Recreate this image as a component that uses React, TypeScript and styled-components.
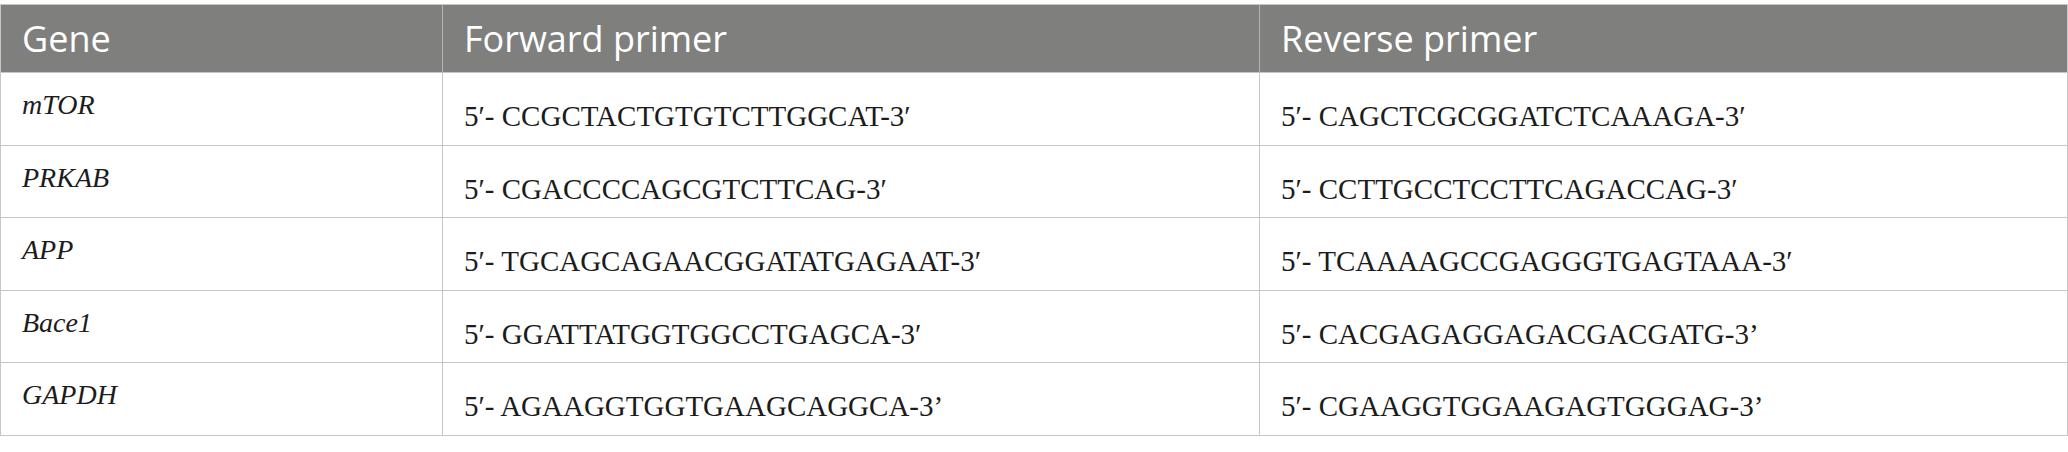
import styled, { createGlobalStyle } from "styled-components";

type Primer = {
  gene: string;
  forward: string;
  reverse: string;
};

const primers: Primer[] = [
  {
    gene: "mTOR",
    forward: "5′- CCGCTACTGTGTCTTGGCAT-3′",
    reverse: "5′- CAGCTCGCGGATCTCAAAGA-3′",
  },
  {
    gene: "PRKAB",
    forward: "5′- CGACCCCAGCGTCTTCAG-3′",
    reverse: "5′- CCTTGCCTCCTTCAGACCAG-3′",
  },
  {
    gene: "APP",
    forward: "5′- TGCAGCAGAACGGATATGAGAAT-3′",
    reverse: "5′- TCAAAAGCCGAGGGTGAGTAAA-3′",
  },
  {
    gene: "Bace1",
    forward: "5′- GGATTATGGTGGCCTGAGCA-3′",
    reverse: "5′- CACGAGAGGAGACGACGATG-3’",
  },
  {
    gene: "GAPDH",
    forward: "5′- AGAAGGTGGTGAAGCAGGCA-3’",
    reverse: "5′- CGAAGGTGGAAGAGTGGGAG-3’",
  },
];

const headers = ["Gene", "Forward primer", "Reverse primer"];

export default function App() {
  return (
    <>
      <GlobalStyle />
      <Table>
        {headers.map((h, i) => (
          <HeaderCell key={h} $first={i === 0}>
            {h}
          </HeaderCell>
        ))}
        {primers.map((p) => (
          <Row key={p.gene}>
            <Cell $first>
              <GeneName>{p.gene}</GeneName>
            </Cell>
            <Cell>
              <Sequence>{p.forward}</Sequence>
            </Cell>
            <Cell>
              <Sequence>{p.reverse}</Sequence>
            </Cell>
          </Row>
        ))}
      </Table>
    </>
  );
}

const GlobalStyle = createGlobalStyle`
  html, body {
    margin: 0;
    padding: 0;
    background: #ffffff;
  }
  body {
    font-family: "Liberation Serif", serif;
  }
`;

const Table = styled.div`
  display: grid;
  grid-template-columns: 441px 817px 808px;
  grid-template-rows: 68px repeat(5, 72.6px);
  margin-top: 4px;
  border: 1px solid #c6c6c6;
  border-bottom: none;
  width: 2068px;
  box-sizing: border-box;
`;

const Row = styled.div`
  display: contents;
`;

const HeaderCell = styled.div<{ $first?: boolean }>`
  box-sizing: border-box;
  display: flex;
  align-items: center;
  padding: 1px 0 0 21px;
  background: #7f807e;
  color: #ffffff;
  font-family: "Open Sans", sans-serif;
  font-size: 36px;
  line-height: 44px;
  border-bottom: 1px solid #c6c6c6;
  border-left: ${({ $first }) => ($first ? "none" : "1px solid #b4b4b4")};
`;

const Cell = styled.div<{ $first?: boolean }>`
  box-sizing: border-box;
  padding: 16px 0 0 21px;
  border-bottom: 1px solid #c6c6c6;
  border-left: ${({ $first }) => ($first ? "none" : "1px solid #c6c6c6")};
  color: #1c1c1c;
`;

const GeneName = styled.div`
  font-family: "Liberation Serif", serif;
  font-style: italic;
  font-size: 28px;
  line-height: 32px;
`;

const Sequence = styled.div`
  margin-top: 11px;
  font-family: "Liberation Serif", serif;
  font-size: 29px;
  line-height: 32px;
  white-space: nowrap;
`;
